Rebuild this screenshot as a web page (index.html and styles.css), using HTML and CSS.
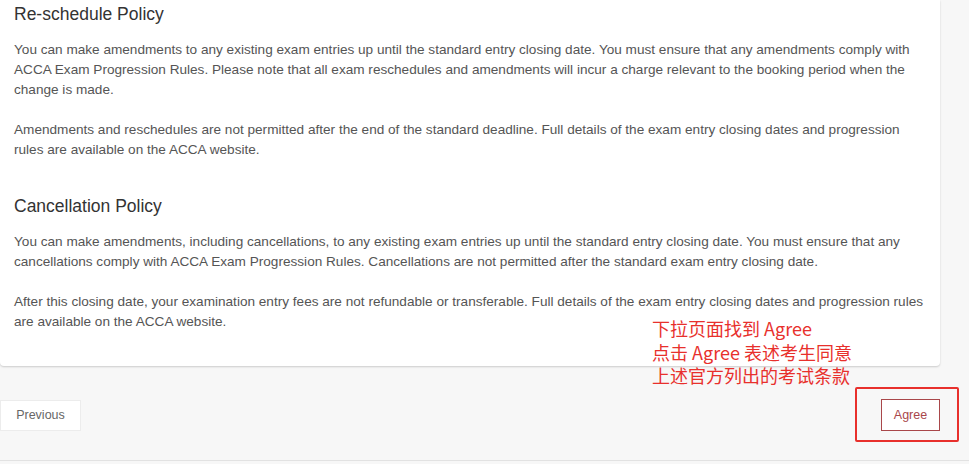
FILE: index.html
```html
<!DOCTYPE html>
<html lang="en">
<head>
    <meta charset="UTF-8">
    <title>Exam Entry Policies</title>
    <link rel="stylesheet" href="styles.css">
</head>
<body>
    <div class="card">
        <section class="policy">
            <h2>Re-schedule Policy</h2>
            <p>You can make amendments to any existing exam entries up until the standard entry closing date. You must ensure that any amendments comply with ACCA Exam Progression Rules. Please note that all exam reschedules and amendments will incur a charge relevant to the booking period when the change is made.</p>
            <p>Amendments and reschedules are not permitted after the end of the standard deadline. Full details of the exam entry closing dates and progression rules are available on the ACCA website.</p>
        </section>
        <section class="policy">
            <h2>Cancellation Policy</h2>
            <p>You can make amendments, including cancellations, to any existing exam entries up until the standard entry closing date. You must ensure that any cancellations comply with ACCA Exam Progression Rules. Cancellations are not permitted after the standard exam entry closing date.</p>
            <p>After this closing date, your examination entry fees are not refundable or transferable. Full details of the exam entry closing dates and progression rules are available on the ACCA website.</p>
        </section>
    </div>

    <div class="actions-bar">
        <div class="actions">
            <button class="btn btn-prev">Previous</button>
            <button class="btn btn-agree">Agree</button>
        </div>
    </div>

    <!-- screenshot annotation -->
    <div class="note">下拉页面找到 Agree<br>点击 Agree 表述考生同意<br>上述官方列出的考试条款</div>
    <div class="note-box"></div>
</body>
</html>
```

FILE: styles.css
```css
body {
    margin: 0;
    background-color: #f7f7f7;
    font-family: "Liberation Sans", Arial, sans-serif;
    color: #555;
}
.card {
    width: 940px;
    box-sizing: border-box;
    background-color: #fff;
    padding: 4px 14px 34px;
    border-radius: 0 0 4px 4px;
    box-shadow: 0 1px 2px rgba(0, 0, 0, 0.18);
}
.policy + .policy {
    margin-top: 36px;
}
.policy h2 {
    margin: 0 0 16px;
    font-size: 17.5px;
    font-weight: normal;
    line-height: 20px;
    color: #333;
}
.policy p {
    margin: 0 0 20px;
    font-size: 13.6px;
    line-height: 20px;
}
.policy p:last-child {
    margin-bottom: 0;
}
.actions-bar {
    padding: 33px 0 29px;
    border-bottom: 1px solid #e2e2e2;
}
.actions {
    width: 940px;
    display: flex;
    justify-content: space-between;
    align-items: center;
}
.btn {
    font-family: "Liberation Sans", Arial, sans-serif;
    font-size: 12.5px;
    background-color: #fff;
    cursor: pointer;
}
.btn-prev {
    width: 81px;
    height: 31px;
    border: 1px solid #ececec;
    color: #666;
}
.btn-agree {
    width: 59px;
    height: 32px;
    border: 1px solid #a9474a;
    color: #a9474a;
}
.note {
    position: absolute;
    left: 652px;
    top: 317px;
    font-family: "Noto Sans CJK SC", "Liberation Sans", sans-serif;
    font-size: 18px;
    line-height: 23.5px;
    color: #e8302c;
}
.note-box {
    position: absolute;
    left: 855px;
    top: 387px;
    width: 100px;
    height: 51px;
    border: 2px solid #e8302c;
    border-radius: 2px;
}
```
